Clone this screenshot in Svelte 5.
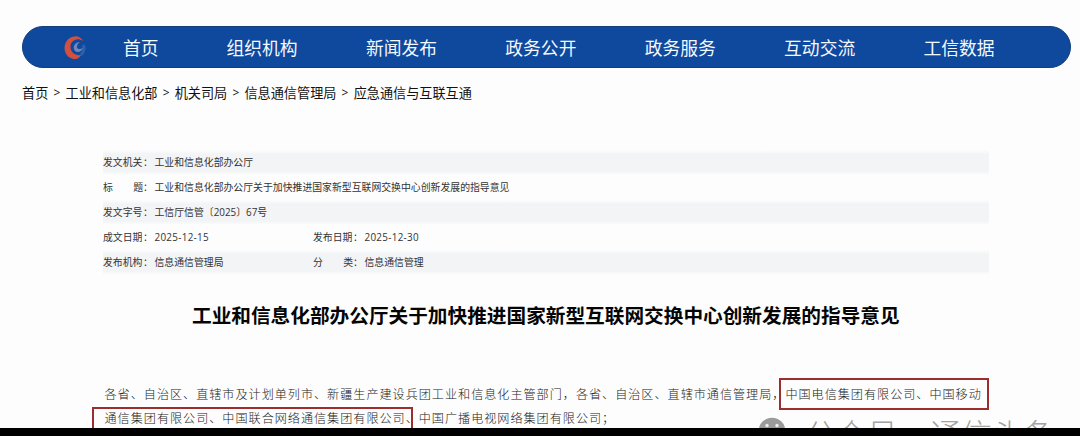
<script lang="ts">
  interface Field {
    label: string;
    value: string;
    spaced?: boolean;
  }

  const navItems = ['组织机构', '新闻发布', '政务公开', '政务服务', '互动交流', '工信数据'];

  const crumbs = ['首页', '工业和信息化部', '机关司局', '信息通信管理局', '应急通信与互联互通'];

  const rows: Field[][] = [
    [{ label: '发文机关', value: '工业和信息化部办公厅' }],
    [
      {
        label: '标题',
        value: '工业和信息化部办公厅关于加快推进国家新型互联网交换中心创新发展的指导意见',
        spaced: true,
      },
    ],
    [{ label: '发文字号', value: '工信厅信管〔2025〕67号' }],
    [
      { label: '成文日期', value: '2025-12-15' },
      { label: '发布日期', value: '2025-12-30' },
    ],
    [
      { label: '发布机构', value: '信息通信管理局' },
      { label: '分类', value: '信息通信管理', spaced: true },
    ],
  ];

  const lines = [
    '各省、自治区、直辖市及计划单列市、新疆生产建设兵团工业和信息化主管部门，各省、自治区、直辖市通信管理局，中国电信集团有限公司、中国移动',
    '通信集团有限公司、中国联合网络通信集团有限公司、中国广播电视网络集团有限公司；',
  ];
</script>

<div class="page">
  <nav>
    <svg class="logo" viewBox="0 0 26 28" width="26" height="28">
      <path d="M21 12Q24 16 19 22" fill="none" stroke="#2b62ab" stroke-width="3" />
      <path
        d="M21 8C18 1 8 2 4 9C0 17 5 26 13 26C16 26 18 24 19 22C13 23 8 19 8.500 13C9 8 15 4 21 8Z"
        fill="#d3503f"
      />
      <path
        d="M18 9C13 9 11 13 12 16C13 20 19 20 21 15C18 17 15 16 15 14C15 12 16 10 18 9Z"
        fill="#7087b8"
      />
    </svg>
    <a class="home" href="#top">首页</a>
    {#each navItems as item}
      <a href="#top">{item}</a>
    {/each}
  </nav>

  <div class="crumbs">
    {#each crumbs as crumb, i}
      {#if i > 0}<span class="sep">&gt;</span>{/if}
      <span>{crumb}</span>
    {/each}
  </div>

  <div class="meta">
    {#each rows as row}
      <div class="row">
        {#each row as field}
          <div class="field">
            <span class="label">
              <span class="name" class:spaced={field.spaced}>
                {#if field.spaced}
                  <span>{field.label[0]}</span><span>{field.label[1]}</span>
                {:else}
                  {field.label}
                {/if}
              </span>：
            </span>
            <span class="value" class:date={field.value.startsWith('2025')}>{field.value}</span>
          </div>
        {/each}
      </div>
    {/each}
  </div>

  <h1>工业和信息化部办公厅关于加快推进国家新型互联网交换中心创新发展的指导意见</h1>

  <div class="body">
    {#each lines as line}
      <p>{line}</p>
    {/each}
  </div>

  <div class="mark first"></div>
  <div class="mark second"></div>

  <div class="watermark">
    <svg viewBox="0 0 28 28" width="28" height="28">
      <circle cx="14" cy="14" r="13.3" fill="#9b9b9b" />
      <circle cx="9" cy="8.5" r="1.7" fill="#eee" />
      <circle cx="19" cy="8.5" r="1.7" fill="#eee" />
    </svg>
    <span>公众号</span>
    <span class="dot">·</span>
    <span>通信头条</span>
  </div>

  <div class="bottom"></div>
</div>

<style>
  :global(body) {
    margin: 0;
    background: #fdfdfd;
  }

  .page {
    position: relative;
    display: flex;
    flex-direction: column;
    width: 1080px;
    height: 436px;
    overflow: hidden;
    background: #fdfdfd;
    color: #111;
    font-family: 'Noto Sans CJK SC', sans-serif;
    white-space: nowrap;
  }

  nav {
    display: flex;
    align-items: center;
    flex: none;
    box-sizing: border-box;
    height: 42px;
    margin: 26px 9px 0 22px;
    padding-left: 39px;
    border: 1px solid #123e7c;
    border-radius: 21px;
    background: #0e499d;
  }

  nav a {
    width: 139.4px;
    color: #f4f8ff;
    font-size: 17.8px;
    line-height: 40px;
    text-decoration: none;
  }

  nav .home {
    width: 103.5px;
    margin-left: 35px;
  }

  .crumbs {
    display: flex;
    flex: none;
    height: 20px;
    margin: 15px 0 0 22px;
    font-size: 13.15px;
    line-height: 20px;
  }

  .sep {
    width: 17.2px;
    font-family: 'Open Sans', sans-serif;
    font-size: 12px;
    text-align: center;
  }

  .meta {
    flex: none;
    width: 886px;
    margin: 47px 0 0 103px;
    color: #333;
    font-size: 9.87px;
  }

  .row {
    display: flex;
    align-items: center;
    height: 25.1px;
    line-height: 25px;
  }

  .row:nth-child(odd) {
    background: linear-gradient(#fdfdfd, #f3f4f5 16%, #f3f4f5 84%, #fdfdfd);
  }

  .field {
    display: flex;
    width: 210px;
  }

  .label {
    display: flex;
    flex: none;
    width: 51.5px;
  }

  .name {
    flex: none;
    width: 40px;
  }

  .spaced {
    display: flex;
    justify-content: space-between;
  }

  .value {
    font-family: 'Open Sans', 'Noto Sans CJK SC', sans-serif;
  }

  .date {
    letter-spacing: 0.3px;
  }

  h1 {
    flex: none;
    margin: 25px 0 0 192px;
    color: #050505;
    font-size: 19.66px;
    font-weight: 700;
    line-height: 30px;
  }

  .body {
    flex: none;
    margin: 53px 0 0 104.5px;
    color: #222;
    font-family: 'Liberation Serif', 'Noto Sans CJK SC', serif;
    font-size: 12.1px;
    font-weight: 300;
    letter-spacing: 1px;
  }

  .body p {
    margin: 0;
    line-height: 24px;
  }

  .mark {
    position: absolute;
    box-sizing: border-box;
    border: 2px solid #9c2f2d;
  }

  .first {
    left: 779px;
    top: 378px;
    width: 210px;
    height: 32px;
  }

  .second {
    left: 92px;
    top: 407px;
    width: 321px;
    height: 32px;
  }

  .watermark {
    position: absolute;
    left: 758px;
    top: 417px;
    display: flex;
    color: #a3a3a3;
    font-size: 31px;
    font-weight: 300;
    line-height: 32px;
  }

  .watermark svg {
    margin-right: 19px;
  }

  .dot {
    width: 32px;
    text-align: center;
  }

  .bottom {
    position: absolute;
    right: 0;
    bottom: 0;
    left: 0;
    height: 8px;
    background: #000;
  }
</style>
